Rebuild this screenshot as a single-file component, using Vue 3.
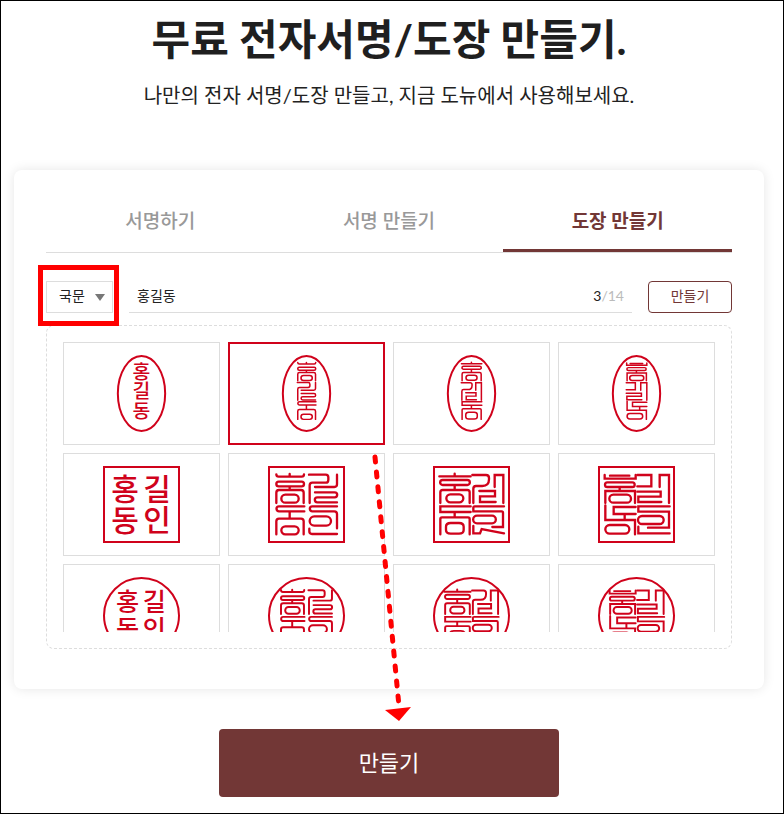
<script setup>
import { ref } from 'vue'

const tabs = ['서명하기', '서명 만들기', '도장 만들기']
const activeTab = ref(2)
const language = ref('국문')
const name = ref('홍길동')
const selected = ref(1)

// Seal-script ornaments, one set of strokes per engraving style.
const engravings = [
  null,
  {
    first: 'M25 25Q25 32 32 32H101Q108 32 108 25M65 24V32M32 47H101A7 7 0 0 1 101 61H32A7 7 0 0 1 32 47M65 61V72M25 111V80Q25 72 33 72H99Q107 72 107 80V111M52 86H80A12 12 0 0 1 80 110H52A12 12 0 0 1 52 86',
    second: 'M123 26H173Q181 26 181 34V41Q181 50 173 50H133Q125 50 125 58V111M207 26V55Q207 63 199 63H141M141 79H200A7 7 0 0 1 200 94H148A7 7 0 0 0 148 109H207',
    third: 'M109 121H33A7 7 0 0 0 33 136H109M65 136V158M25 205V166Q25 158 33 158H99Q107 158 107 166V205M52 181H80A12 12 0 0 1 80 205H52A12 12 0 0 1 52 181',
    fourth: 'M207 121H133A7 7 0 0 0 133 136H199Q207 136 207 144V187M139 151H175A14 14 0 0 1 175 179H139A14 14 0 0 1 139 151M124 188V196Q124 204 132 204H207'
  },
  {
    first: 'M19 31H113M65 23V31M29 42H103A7 7 0 0 1 103 57H29A7 7 0 0 1 29 42M65 57V72M22 111V79Q22 72 29 72H103Q110 72 110 79V111M52 85H79A12 12 0 0 1 79 109H52A12 12 0 0 1 52 85',
    second: 'M118 27H159Q168 27 168 36V40Q168 60 148 60H129Q121 60 121 68V111M185 63V27H211V111M139 75H186V91H141V108H188',
    third: 'M113 121H22V138H113M65 138V154M22 205V159Q22 154 27 154H105Q110 154 110 159V205M53 171H78Q92 171 92 182V192Q92 203 78 203H53Q39 203 39 192V182Q39 171 53 171',
    fourth: 'M213 121H125Q121 121 121 125V136H206Q210 136 210 140V183H178M132 149H177A11 11 0 0 1 177 172H132A11 11 0 0 1 132 149M121 180V202H141L146 189L213 202'
  },
  {
    first: 'M20 27V38H113V27M36 29H94M28 49H103A7 7 0 0 1 103 63H28A7 7 0 0 1 28 49M65 63V75M22 111V75H111V111M46 86H87A12 12 0 0 1 87 110H46A12 12 0 0 1 46 86',
    second: 'M118 27H160V61H118M185 63V27H213V111M118 77H188V92H121V108H190',
    third: 'M22 118V162H111V205M113 123H47V144H113M80 144V162M35 177H81A13 13 0 0 1 81 203H35A13 13 0 0 1 35 177',
    fourth: 'M215 121H121V137H213V185H150M132 150H185A12 12 0 0 1 185 174H132A12 12 0 0 1 132 150M121 182V202H215'
  }
]

const shapes = ['oval', 'square', 'circle']
const seals = shapes.flatMap((shape) =>
  engravings.map((strokes, style) => ({ shape, strokes, style }))
)
</script>

<template>
  <main class="page">
    <h1 class="title">무료 전자서명/도장 만들기.</h1>
    <p class="subtitle">나만의 전자 서명/도장 만들고, 지금 도뉴에서 사용해보세요.</p>

    <section class="card">
      <div class="tabs" role="tablist">
        <button
          v-for="(tab, i) in tabs"
          :key="tab"
          type="button"
          role="tab"
          class="tab"
          :class="{ active: i === activeTab }"
          :aria-selected="i === activeTab"
          @click="activeTab = i"
        >{{ tab }}</button>
      </div>

      <form class="controls" @submit.prevent>
        <div class="language">
          <select v-model="language" class="language-select" aria-label="언어">
            <option>국문</option>
            <option>영문</option>
          </select>
          <span class="caret"></span>
          <span class="highlight"></span>
        </div>
        <div class="name-field">
          <input v-model="name" class="name-input" type="text" maxlength="14" aria-label="이름" />
          <span class="count"><b>{{ name.length }}</b>/14</span>
        </div>
        <button class="make-small" type="submit">만들기</button>
      </form>

      <div class="gallery">
        <div class="seal-list">
          <button
            v-for="(seal, i) in seals"
            :key="i"
            type="button"
            class="seal-option"
            :class="{ selected: i === selected }"
            :aria-label="'도장 ' + (i + 1)"
            @click="selected = i"
          >
            <svg class="seal" viewBox="0 0 231 231" aria-hidden="true">
              <template v-if="seal.shape === 'oval'">
                <ellipse class="frame" cx="115.500" cy="115.500" rx="71" ry="112.500" />
                <g v-if="seal.strokes" class="engraving">
                  <path :d="seal.strokes.first" transform="translate(73 7) scale(.65 .63)" />
                  <path :d="seal.strokes.second" transform="translate(8 66) scale(.65 .63)" />
                  <path :d="seal.strokes.third" transform="translate(73 64) scale(.65 .63)" />
                </g>
                <g v-else class="lettering small">
                  <text x="115" y="71">홍</text>
                  <text x="115" y="130">길</text>
                  <text x="115" y="189">동</text>
                </g>
              </template>
              <template v-else>
                <rect v-if="seal.shape === 'square'" class="frame" x="3" y="3" width="225" height="225" />
                <circle v-else class="frame" cx="115.500" cy="115.500" r="112.500" />
                <g :transform="seal.shape === 'circle' ? 'translate(18 18) scale(.84)' : undefined">
                  <g v-if="seal.strokes" class="engraving">
                    <path v-for="(d, key) in seal.strokes" :key="key" :d="d" />
                  </g>
                  <g v-else class="lettering">
                    <text x="66" y="101">홍</text>
                    <text x="162" y="101">길</text>
                    <text x="66" y="196">동</text>
                    <text x="162" y="196">인</text>
                  </g>
                </g>
              </template>
            </svg>
          </button>
        </div>
      </div>
    </section>

    <button class="make-large" type="button">만들기</button>

    <svg class="arrow" viewBox="0 0 48 272" aria-hidden="true">
      <path class="arrow-line" d="M9 7L33 256" />
      <path class="arrow-head" d="M19 260L45 257L33 271Z" />
    </svg>
  </main>
</template>

<style>
body {
  margin: 0;
  background: #fff;
}
</style>

<style scoped>
.page,
.page * {
  box-sizing: border-box;
}

.page {
  position: relative;
  display: flex;
  flex-direction: column;
  align-items: center;
  min-height: 100vh;
  padding: 8px 19px 16px 13px;
  border: 1px solid #000;
  background: #fff;
  color: #222;
  font-family: Lato, "Noto Sans CJK KR", sans-serif;
}

button,
input,
select {
  margin: 0;
  padding: 0;
  border: 0;
  background: none;
  color: inherit;
  font: inherit;
}

.title {
  margin: 0;
  color: #1f1f1f;
  font-size: 42px;
  font-weight: 700;
  line-height: 60px;
}

.subtitle {
  margin: 11px 0 0;
  font-size: 20px;
  line-height: 30px;
}

.card {
  width: 100%;
  margin: 60px 0 40px;
  padding: 20px 32px 40px;
  border-radius: 8px;
  background: #fff;
  box-shadow: 0 0 12px rgba(0, 0, 0, 0.1);
}

.tabs {
  display: grid;
  grid-template-columns: repeat(3, 1fr);
  border-bottom: 1px solid #ddd;
}

.tab {
  height: 62px;
  border-bottom: 3px solid transparent;
  color: #999;
  font-size: 19px;
  font-weight: 500;
}

.tab.active {
  border-color: #723736;
  color: #723736;
  font-weight: 700;
}

.controls {
  display: flex;
  gap: 16px;
  height: 32px;
  margin: 28px 0 12px;
  font-size: 14px;
}

.language {
  position: relative;
  flex: 0 0 67px;
}

.language-select {
  width: 100%;
  height: 32px;
  padding: 0 0 4px 12px;
  border: 1px solid #ddd;
  appearance: none;
}

.caret {
  position: absolute;
  top: 13px;
  right: 8px;
  border-top: 7px solid #777;
  border-right: 5px solid transparent;
  border-left: 5px solid transparent;
  pointer-events: none;
}

.highlight {
  position: absolute;
  inset: -16px -6px -13px -8px;
  border: 5px solid #f00;
  pointer-events: none;
}

.name-field {
  display: flex;
  flex: 1;
  align-items: center;
  min-width: 0;
  padding: 0 8px 3px;
  border-bottom: 1px solid #ddd;
}

.name-input {
  flex: 1;
  min-width: 0;
  outline: none;
}

.count {
  color: #bbb;
}

.count b {
  color: #222;
  font-weight: 400;
}

.make-small {
  flex: 0 0 84px;
  padding-bottom: 4px;
  border: 1px solid #723736;
  border-radius: 4px;
  color: #723736;
}

.gallery {
  padding: 16px;
  border: 1px dashed #ddd;
  border-radius: 8px;
}

.seal-list {
  display: grid;
  grid-template-columns: repeat(4, 1fr);
  grid-auto-rows: 103px;
  gap: 8px;
  height: 290px;
  overflow: hidden;
}

.seal-option {
  display: flex;
  align-items: center;
  justify-content: center;
  border: 1px solid #ddd;
}

.seal-option.selected {
  border: 2px solid #d0021b;
}

.seal {
  width: 77px;
  height: 77px;
}

.frame {
  fill: none;
  stroke: #d0021b;
  stroke-width: 6;
}

.engraving {
  fill: none;
  stroke: #d0021b;
  stroke-width: 7;
  stroke-linecap: round;
}

.lettering {
  fill: #d0021b;
  font-family: "Noto Sans CJK KR", sans-serif;
  font-size: 90px;
  font-weight: 500;
  text-anchor: middle;
}

.lettering.small {
  font-size: 58px;
}

.make-large {
  width: 340px;
  max-width: 100%;
  height: 68px;
  padding-bottom: 4px;
  border-radius: 4px;
  background: #723736;
  color: #fff;
  font-size: 22px;
}

.arrow {
  position: absolute;
  top: 449px;
  left: 365px;
  width: 48px;
  height: 272px;
  pointer-events: none;
}

.arrow-line {
  fill: none;
  stroke: #f00;
  stroke-width: 5;
  stroke-linecap: round;
  stroke-dasharray: 5 10;
}

.arrow-head {
  fill: #f00;
}
</style>
